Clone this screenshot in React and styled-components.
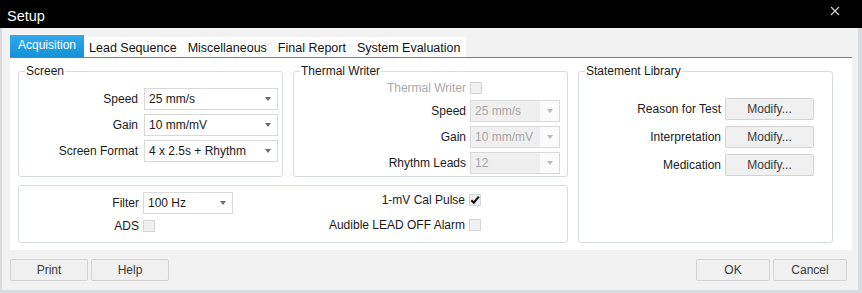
import React from "react";
import styled, { createGlobalStyle } from "styled-components";

const GlobalStyle = createGlobalStyle`
  html, body {
    margin: 0;
    padding: 0;
    background: #f2f2f2;
  }
  body {
    font-family: "Liberation Sans", Arial, sans-serif;
    font-size: 12px;
    color: #1a1a1a;
  }
`;

const Window = styled.div`
  width: 862px;
  height: 293px;
  display: flex;
  flex-direction: column;
  background: #f2f2f2;
`;

const TitleBar = styled.div`
  height: 28px;
  flex: none;
  box-sizing: border-box;
  background: #000;
  color: #fff;
  display: flex;
  align-items: center;
  justify-content: space-between;
  padding: 3px 22px 0 7px;
  font-size: 14.5px;
`;

const CloseIcon = styled.svg`
  width: 10px;
  height: 10px;
  margin-top: -9px;
`;

const Body = styled.div`
  flex: 1;
  display: flex;
  flex-direction: column;
  padding: 7px 6px 0 8px;
  border-left: 2px solid #d7d9dc;
  border-right: 4px solid #d8dce1;
  border-bottom: 3px solid #d8dce1;
`;

const TabStrip = styled.div`
  display: flex;
  align-items: flex-end;
  height: 22px;
`;

const Tab = styled.div`
  height: ${(p) => (p.$active ? "22px" : "20px")};
  display: flex;
  align-items: center;
  padding: ${(p) => (p.$active ? "0 8px 2px" : "2px 6px 0 5px")};
  box-sizing: border-box;
  background: ${(p) =>
    p.$active ? "linear-gradient(#2fa9ea, #1591d8)" : "#fff"};
  color: ${(p) => (p.$active ? "#fff" : "#111")};
  font-size: ${(p) => (p.$active ? "12px" : "12.5px")};
  white-space: nowrap;
`;

const Panel = styled.div`
  background: #fff;
  border-top: 1px solid #1e9ade;
  padding: 6px 19px 7px 8px;
  display: grid;
  grid-template-columns: 265px 275px 255px;
  grid-template-rows: 113px 58px;
  column-gap: 10px;
  row-gap: 8px;
`;

const Group = styled.fieldset`
  margin: 0;
  padding: 0;
  min-width: 0;
  box-sizing: border-box;
  border: 1px solid #d6dbe1;
  border-radius: 3px;
  grid-column: ${(p) => p.$col || "auto"};
  grid-row: ${(p) => p.$row || "auto"};
`;

const Legend = styled.legend`
  margin-left: 6px;
  padding: 0 1px;
  line-height: 15px;
  color: #1a1a1a;
`;

const FieldGrid = styled.div`
  display: grid;
  grid-template-columns: 1fr ${(p) => p.$control}px;
  grid-template-rows: ${(p) => p.$rows || "none"};
  grid-auto-rows: 22px;
  column-gap: ${(p) => p.$gap || 4}px;
  row-gap: ${(p) => p.$rowGap || 4}px;
  align-items: center;
  padding: ${(p) => p.$pad};
`;

const Label = styled.span`
  text-align: right;
  white-space: nowrap;
  color: ${(p) => (p.$disabled ? "#a9a9a9" : "#1a1a1a")};
`;

const SelectBox = styled.div`
  height: 22px;
  box-sizing: border-box;
  border: 1px solid #d9d9d9;
  background: #fff;
  display: flex;
  align-items: stretch;
  color: ${(p) => (p.$disabled ? "#a6a6a6" : "#1a1a1a")};
`;

const SelectValue = styled.div`
  flex: 1;
  display: flex;
  align-items: center;
  padding-left: 4px;
  background: ${(p) => (p.$disabled ? "#efefef" : "transparent")};
  white-space: nowrap;
`;

const ArrowZone = styled.div`
  width: 19px;
  flex: none;
  display: flex;
  align-items: center;
  justify-content: center;
  background: ${(p) => (p.$disabled ? "#fbfbfb" : "transparent")};
`;

const CheckBox = styled.div`
  width: 12px;
  height: 12px;
  box-sizing: border-box;
  border: 1px solid #d4d4d4;
  background: #f0f0f0;
  display: flex;
  align-items: center;
  justify-content: center;
  justify-self: start;
`;

const Button = styled.button`
  width: ${(p) => p.$w}px;
  height: 22px;
  box-sizing: border-box;
  padding: 0;
  border: 1px solid #d3d3d3;
  border-radius: 2px;
  background: #f0f0f0;
  font-family: "Liberation Sans", Arial, sans-serif;
  font-size: 12px;
  color: #3a3a3a;
`;

const BottomRow = styled.div`
  display: flex;
  padding-top: 6px;
  column-gap: 4px;
`;

const SubGrid = styled.div`
  display: grid;
  grid-template-columns: ${(p) => p.$cols};
  grid-template-rows: ${(p) => p.$rows};
  column-gap: 4px;
  row-gap: ${(p) => p.$rowGap}px;
  align-items: center;
`;

const Footer = styled.div`
  display: flex;
  justify-content: space-between;
  margin-top: 9px;
  padding-right: 5px;
`;

const ButtonGroup = styled.div`
  display: flex;
  gap: 3px;
`;

function Select({ value, disabled }) {
  return (
    <SelectBox $disabled={disabled}>
      <SelectValue $disabled={disabled}>{value}</SelectValue>
      <ArrowZone $disabled={disabled}>
        <svg width="6" height="4" viewBox="0 0 6 4">
          <path d="M0 0 L6 0 L3 4 Z" fill={disabled ? "#b9b9b9" : "#6b6b6b"} />
        </svg>
      </ArrowZone>
    </SelectBox>
  );
}

function Check({ checked }) {
  return (
    <CheckBox>
      {checked && (
        <svg width="10" height="10" viewBox="0 0 10 10">
          <path
            d="M1.3 5.2 L3.8 7.7 L8.8 1.6"
            fill="none"
            stroke="#111"
            strokeWidth="2.1"
          />
        </svg>
      )}
    </CheckBox>
  );
}

const tabs = [
  "Acquisition",
  "Lead Sequence",
  "Miscellaneous",
  "Final Report",
  "System Evaluation",
];

export default function App() {
  return (
    <>
      <GlobalStyle />
      <Window>
        <TitleBar>
          <span>Setup</span>
          <CloseIcon viewBox="0 0 10 10">
            <path d="M1 1 L9 9 M9 1 L1 9" stroke="#d0d0d0" strokeWidth="1.2" />
          </CloseIcon>
        </TitleBar>
        <Body>
          <TabStrip>
            {tabs.map((t, i) => (
              <Tab key={t} $active={i === 0}>
                {t}
              </Tab>
            ))}
          </TabStrip>
          <Panel>
            <Group $col="1" $row="1">
              <Legend>Screen</Legend>
              <FieldGrid $control={134} $gap={6} $pad="9px 4px 0 0">
                <Label>Speed</Label>
                <Select value="25 mm/s" />
                <Label>Gain</Label>
                <Select value="10 mm/mV" />
                <Label>Screen Format</Label>
                <Select value="4 x 2.5s + Rhythm" />
              </FieldGrid>
            </Group>

            <Group $col="2" $row="1">
              <Legend>Thermal Writer</Legend>
              <FieldGrid
                $control={90}
                $rows="16px 22px 22px 22px"
                $pad="1px 7px 0 0"
              >
                <Label $disabled>Thermal Writer</Label>
                <Check />
                <Label>Speed</Label>
                <Select value="25 mm/s" disabled />
                <Label>Gain</Label>
                <Select value="10 mm/mV" disabled />
                <Label>Rhythm Leads</Label>
                <Select value="12" disabled />
              </FieldGrid>
            </Group>

            <Group $col="3" $row="1 / span 2">
              <Legend>Statement Library</Legend>
              <FieldGrid $control={89} $rowGap={6} $pad="19px 18px 0 0">
                <Label>Reason for Test</Label>
                <Button $w={89}>Modify...</Button>
                <Label>Interpretation</Label>
                <Button $w={89}>Modify...</Button>
                <Label>Medication</Label>
                <Button $w={89}>Modify...</Button>
              </FieldGrid>
            </Group>

            <Group $col="1 / span 2" $row="2">
              <BottomRow>
                <SubGrid $cols="120px 90px" $rows="22px 16px" $rowGap={4}>
                  <Label>Filter</Label>
                  <Select value="100 Hz" />
                  <Label>ADS</Label>
                  <Check />
                </SubGrid>
                <SubGrid $cols="228px 12px" $rows="16px 16px" $rowGap={9}>
                  <Label>1-mV Cal Pulse</Label>
                  <Check checked />
                  <Label>Audible LEAD OFF Alarm</Label>
                  <Check />
                </SubGrid>
              </BottomRow>
            </Group>
          </Panel>
          <Footer>
            <ButtonGroup>
              <Button $w={78}>Print</Button>
              <Button $w={78}>Help</Button>
            </ButtonGroup>
            <ButtonGroup>
              <Button $w={74}>OK</Button>
              <Button $w={74}>Cancel</Button>
            </ButtonGroup>
          </Footer>
        </Body>
      </Window>
    </>
  );
}
